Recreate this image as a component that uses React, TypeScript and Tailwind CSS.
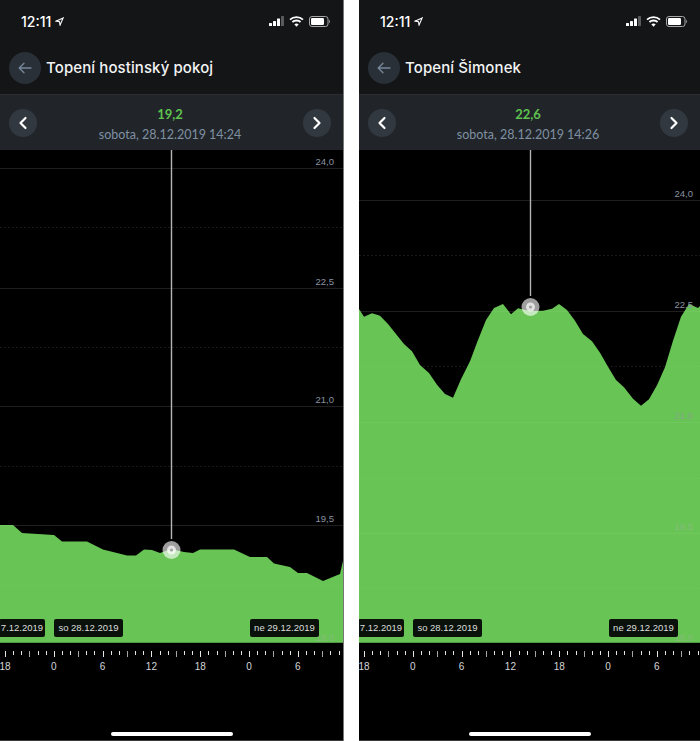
const sans = "font-['Lato','Noto_Sans',sans-serif]";

type PanelProps = {
  width: string;
  title: string;
  value: string;
  date: string;
  line: number[][];
  cursorY: number;
  grid: number[];
  labels: { text: string; y: number; color: string }[];
  labelRight: number;
};

const left = [
  [0, 525], [13, 525], [22, 533], [54, 535], [62, 541.6], [87, 541.6], [103, 549.6], [127, 555.6], [136, 555.6],
  [144, 549.5], [152, 550], [160, 553], [171, 549], [184, 552], [193, 553], [200, 549.5], [234, 549.5], [250, 557],
  [267, 557], [274, 563.5], [290, 567], [298, 573], [307, 573], [323, 581], [340, 574], [343, 561],
];

// right panel, x counted from its own left edge (359)
const right = [
  [0, 309], [5, 316.7], [13, 313.3], [21, 315.7], [29, 324], [37, 334], [45, 344], [53, 351.3], [61, 365], [70, 373],
  [78, 384.7], [86, 394], [94, 397.7], [102, 379.3], [111, 361.3], [119, 340], [127, 320], [135, 308], [144, 304],
  [152, 314.3], [159, 308.3], [171, 311], [184, 310.7], [193, 308.7], [200, 304], [208, 310], [216, 320.7], [224, 334],
  [233, 341.3], [241, 352.7], [249, 366.7], [257, 380], [265, 387.3], [274, 398.7], [282, 405.7], [290, 399.3],
  [298, 385.3], [306, 367.3], [314, 340.7], [322, 316.7], [330, 304], [339, 308], [341, 306],
];

function StatusBar() {
  return (
    <div className="flex h-[44px] items-center justify-between pb-[2px] pl-[21px] pr-[12px]">
      <div className="flex items-center gap-[4px] font-['Inter',sans-serif] text-[14px] font-medium text-white">
        12:11
        <svg width="9" height="9" viewBox="0 0 10 10" fill="none" stroke="#fff" strokeWidth="1.2">
          <path d="M9 1 L1 4.6 L5 5.2 L5.6 9 Z" />
        </svg>
      </div>
      <div className="flex items-center gap-[5px]">
        <svg width="15" height="10" viewBox="0 0 15 10" fill="#fff">
          <rect x="0" y="7" width="3" height="3" rx="0.5" />
          <rect x="4" y="5" width="3" height="5" rx="0.5" />
          <rect x="8" y="2.5" width="3" height="7.5" rx="0.5" />
          <rect x="12" y="0" width="3" height="10" rx="0.5" fill="#5a5a5a" />
        </svg>
        <svg width="15" height="11" viewBox="0 0 15 11" fill="none" stroke="#fff" strokeWidth="1.8">
          <path d="M1 3.6 C4.6 0.2 10.4 0.2 14 3.6" />
          <path d="M3.4 6 C5.6 4 9.4 4 11.6 6" />
          <path d="M7.5 10.8 L5.3 8.2 C6.6 7.3 8.4 7.3 9.7 8.2 Z" fill="#fff" stroke="none" />
        </svg>
        <svg width="22" height="11" viewBox="0 0 22 11" fill="none">
          <rect x="0.5" y="0.5" width="18.5" height="10" rx="2.5" stroke="#a5a6a8" />
          <rect x="2" y="2" width="13" height="7" rx="1.2" fill="#fff" />
          <path d="M20.2 3.8 C21.4 4.2 21.4 6.8 20.2 7.2 Z" fill="#a5a6a8" />
        </svg>
      </div>
    </div>
  );
}

function RoundButton({ dir }: { dir: "left" | "right" }) {
  return (
    <div className="flex h-[28px] w-[28px] items-center justify-center rounded-full bg-[#323840]">
      <svg width="10" height="14" viewBox="0 0 10 14" fill="none" stroke="#fff" strokeWidth="2.2" strokeLinecap="round" strokeLinejoin="round">
        {dir === "left" ? <path d="M7.5 2 L2.5 7 L7.5 12" /> : <path d="M2.5 2 L7.5 7 L2.5 12" />}
      </svg>
    </div>
  );
}

function Ruler() {
  const hour = 8.135;
  const ticks = [];
  for (let i = 0; i < 44; i++) {
    const x = Math.round(5 + i * hour) + 0.5;
    const major = i % 6 === 0;
    const mid = i % 3 === 0;
    ticks.push(
      <line key={i} x1={x} x2={x} y1={8} y2={major || mid ? 14 : 12} stroke="#fff" strokeOpacity={mid && !major ? 0.65 : 0.9} />
    );
  }
  const labels = ["18", "0", "6", "12", "18", "0", "6"];
  return (
    <div className="relative h-[98px] overflow-hidden border-b border-[#3a3a3a] bg-black">
      <svg className="absolute left-0 top-0" width="344" height="20">{ticks}</svg>
      {labels.map((l, i) => (
        <span
          key={i}
          className="absolute top-[16px] w-[20px] -translate-x-1/2 text-center font-['Liberation_Sans',sans-serif] text-[10px] text-[#d4d6d8]"
          style={{ left: 5 + i * 6 * 8.135 }}
        >
          {l}
        </span>
      ))}
      <div className="absolute bottom-[4px] left-1/2 h-[4px] w-[122px] -translate-x-1/2 rounded-full bg-white" />
    </div>
  );
}

function DateChip({ text, x, w }: { text: string; x: number; w: number }) {
  return (
    <div
      className="absolute top-[469px] flex h-[18px] items-center justify-center overflow-hidden whitespace-nowrap rounded-[2px] bg-[#0a110b] font-['Liberation_Sans',sans-serif] text-[9.5px] text-[#dcdedc]"
      style={{ left: x, width: w }}
    >
      {text}
    </div>
  );
}

function Panel({ width, title, value, date, line, cursorY, grid, labels, labelRight }: PanelProps) {
  const w = parseInt(width);
  const pts = line.map((p) => `${p[0]},${p[1] - 150}`).join(" ");
  const cy = cursorY - 150;
  const gridLines = (opacity: number) =>
    grid.map((y, i) => (
      <line
        key={y}
        x1="0"
        x2={w}
        y1={y - 150 + 0.5}
        y2={y - 150 + 0.5}
        stroke="#fff"
        strokeOpacity={i % 2 === 0 ? opacity : opacity * 0.8}
        strokeDasharray={i % 2 === 0 ? undefined : "2 2"}
      />
    ));
  return (
    <div className={`flex h-[741px] shrink-0 flex-col bg-black ${sans}`} style={{ width }}>
      <div className="h-[94px] bg-[#131517]">
        <StatusBar />
        <div className="flex h-[48px] items-center gap-[5px] pl-[9px]">
          <div className="flex h-[32px] w-[32px] items-center justify-center rounded-full bg-[#2a3037]">
            <svg width="14" height="12" viewBox="0 0 14 12" fill="none" stroke="#76879b" strokeWidth="1.3" strokeLinecap="round" strokeLinejoin="round">
              <path d="M13 6 H1.5 M6 1.2 L1.2 6 L6 10.8" />
            </svg>
          </div>
          <span className="font-['Inter',sans-serif] text-[15px] font-medium tracking-[0.1px] text-[#f2f3f4]">{title}</span>
        </div>
      </div>
      <div className="flex h-[56px] items-center justify-between border-t border-[#2a2e33] bg-[#212529] pl-[9px] pr-[12px]">
        <RoundButton dir="left" />
        <div className="flex flex-col items-center pt-[3px]">
          <span className="text-[13px] font-bold leading-[18px] text-[#5fc24f]">{value}</span>
          <span className="mt-[3px] text-[12.5px] leading-[18px] text-[#7f90a2]">{date}</span>
        </div>
        <RoundButton dir="right" />
      </div>
      <div className="relative h-[493px] overflow-hidden bg-black">
        <svg className="absolute left-0 top-0" width={w} height="493">
          {gridLines(0.07)}
          <polygon points={`0,493 ${pts} ${w},493`} fill="#68c454" />
          {gridLines(0.06)}
          <rect x="0" y="492" width={w} height="1" fill="#4f9a42" />
        </svg>
        {labels.map((l) => (
          <span
            key={l.text}
            className="absolute font-['Liberation_Sans',sans-serif] text-[9.5px] leading-[12px]"
            style={{ top: l.y - 150 - 12, right: labelRight, color: l.color }}
          >
            {l.text}
          </span>
        ))}
        <svg className="absolute left-0 top-0" width={w} height="493">
          <line x1="171.5" x2="171.5" y1="0" y2={cy - 11} stroke="#b4b4b4" strokeWidth="1.4" />
          <circle cx="171.5" cy={cy} r="9" fill="#fff" fillOpacity="0.62" />
          <circle cx="171.5" cy={cy} r="4.5" fill="#fff" fillOpacity="0.7" />
          <circle cx="171.5" cy={cy} r="1.6" fill="#a0a0a0" />
        </svg>
        <DateChip text="7.12.2019" x={-1} w={46} />
        <DateChip text="so 28.12.2019" x={54} w={69} />
        <DateChip text="ne 29.12.2019" x={250} w={69} />
      </div>
      <Ruler />
    </div>
  );
}

export default function App() {
  return (
    <div className="flex h-[741px] w-[700px] overflow-hidden bg-white">
      <Panel
        width="343px"
        title="Topení hostinský pokoj"
        value="19,2"
        date="sobota, 28.12.2019 14:24"
        line={left}
        cursorY={550}
        grid={[168, 227, 288, 347, 406, 466, 525, 585]}
        labels={[
          { text: "24,0", y: 168, color: "#8a93a3" },
          { text: "22,5", y: 288, color: "#8a93a3" },
          { text: "21,0", y: 406, color: "#8a93a3" },
          { text: "19,5", y: 525, color: "#8a93a3" },
          { text: "18,0", y: 644, color: "#84bd7b" },
        ]}
        labelRight={9}
      />
      <div className="w-[16px] shrink-0 border-l border-[#777]" />
      <Panel
        width="341px"
        title="Topení Šimonek"
        value="22,6"
        date="sobota, 28.12.2019 14:26"
        line={right}
        cursorY={307}
        grid={[200, 255, 311, 366, 422, 478, 533, 588]}
        labels={[
          { text: "24,0", y: 200, color: "#8a93a3" },
          { text: "22,5", y: 311, color: "#8a93a3" },
          { text: "21,0", y: 422, color: "#84a888" },
          { text: "19,5", y: 533, color: "#84bd7b" },
          { text: "18,0", y: 644, color: "#84bd7b" },
        ]}
        labelRight={7}
      />
    </div>
  );
}
